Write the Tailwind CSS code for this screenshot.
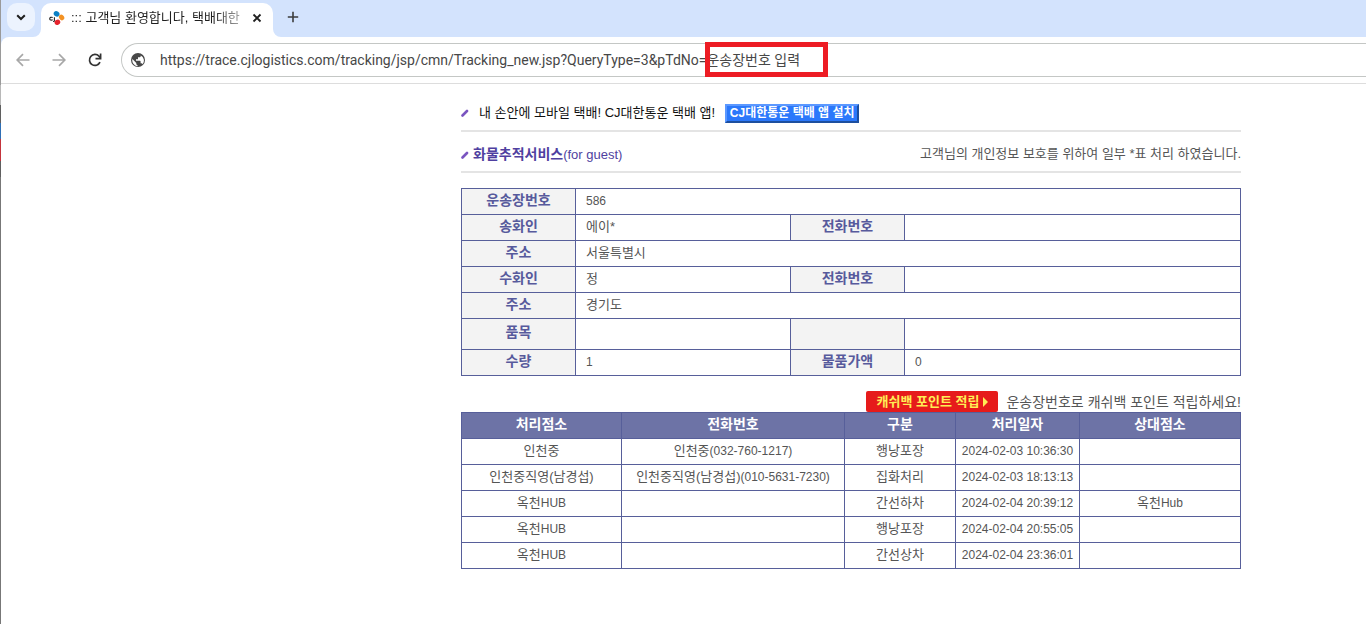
<!DOCTYPE html>
<html lang="ko">
<head>
<meta charset="utf-8">
<title>::: 고객님 환영합니다, 택배대한통운 :::</title>
<script src="https://cdn.jsdelivr.net/npm/@tailwindcss/browser@4"></script>
</head>
<body class="min-h-screen flex bg-white overflow-x-hidden text-[13px] leading-5 text-[#555] font-['Liberation_Sans','Noto_Sans_CJK_KR',sans-serif]">
<!-- window edge -->
<div class="w-px shrink-0 flex flex-col bg-[#777]">
  <div class="h-[85px] bg-[#9a9a9a]"></div><div class="h-5 bg-[#b8b8b8]"></div><div class="h-[18px] bg-[#5f5f5f]"></div><div class="h-4 bg-[#2f6fb5]"></div><div class="h-[22px] bg-[#c4343c]"></div><div class="h-4 bg-[#5f5f5f]"></div>
</div>
<div class="flex-1 min-w-0">
  <header class="bg-[#d3e3fd]">
    <div class="flex h-[37px] pl-1.5">
      <button aria-label="탭 검색" class="mt-[3px] size-7 rounded-[10px] bg-[#ecf3fe] flex items-center justify-center">
        <svg class="size-3" viewBox="0 0 12 12" fill="none" stroke="#1f1f1f" stroke-width="2"><path d="M2.2 4.2 6 8l3.800-3.800"/></svg>
      </button>
      <svg class="self-end w-2 h-2 -ml-0.5" viewBox="0 0 8 8"><path d="M8 0v8H0a8 8 0 0 0 8-8z" fill="#fff"/></svg>
      <div class="mt-[3px] w-[232px] rounded-t-[10px] bg-white flex items-center pl-2 pr-2 pb-1">
        <svg class="size-4 shrink-0" viewBox="0 0 16 16"><ellipse cx="7.600" cy="3.800" rx="3" ry="2.600" transform="rotate(35 7.600 3.800)" fill="#0b80c4"/><ellipse cx="12.600" cy="7.400" rx="3" ry="2.500" transform="rotate(55 12.600 7.400)" fill="#f39223"/><ellipse cx="8.400" cy="12.200" rx="2.900" ry="2.600" transform="rotate(-30 8.400 12.200)" fill="#e5232c"/><path d="M3.700 7.600c-1.400-.8-3-.2-3 1.100s1.600 1.800 3 1M5.400 7.200v3.200c0 .9-.5 1.200-1.300 1.100" fill="none" stroke="#222" stroke-width="1.100"/></svg>
        <span class="ml-1.5 whitespace-nowrap text-[#1f1f1f] [mask-image:linear-gradient(to_right,#000_84%,#0006)]">::: 고객님 환영합니다, 택배대한</span>
        <button aria-label="탭 닫기" class="ml-auto size-4 flex items-center justify-center"><svg class="size-3" viewBox="0 0 12 12" stroke="#1f1f1f" stroke-width="1.800"><path d="m2.500 2.500 7 7m0-7-7 7"/></svg></button>
      </div>
      <svg class="self-end w-2 h-2" viewBox="0 0 8 8"><path d="M0 0v8h8a8 8 0 0 1-8-8z" fill="#fff"/></svg>
      <button aria-label="새 탭" class="mt-[3px] -ml-0.5 size-7 flex items-center justify-center"><svg class="size-3" viewBox="0 0 12 12" stroke="#3c3c3c" stroke-width="1.600"><path d="M6 .8v10.400M.8 6h10.400"/></svg></button>
    </div>
    <nav class="flex items-center h-[47px] bg-white rounded-tl-lg border-b border-[#ddd]">
      <button aria-label="뒤로" class="ml-3 size-5 flex items-center justify-center"><svg class="size-3.5" viewBox="0 0 14 14" fill="none" stroke="#a8a8a8" stroke-width="1.700"><path d="M13.500 7H1.500M7 1.200 1.200 7 7 12.800"/></svg></button>
      <button aria-label="앞으로" class="ml-4 size-5 flex items-center justify-center"><svg class="size-3.5" viewBox="0 0 14 14" fill="none" stroke="#a8a8a8" stroke-width="1.700"><path d="M.5 7h12M7 1.200 12.800 7 7 12.800"/></svg></button>
      <button aria-label="새로고침" class="ml-4 size-5 flex items-center justify-center"><svg class="size-3.5" viewBox="0 0 14 14" fill="none" stroke="#333" stroke-width="1.700"><path d="M12 9.200A5.500 5.500 0 1 1 11 3.200L12.500 5"/><path d="M12.600.5v5.200H7.500" /></svg></button>
      <div class="relative flex-1 ml-4 h-[34px] flex items-center rounded-l-full border border-r-0 border-[#c4c7c5]">
        <svg class="ml-2 size-4 shrink-0" viewBox="0 0 16 16"><circle cx="8" cy="8" r="7" fill="#474747"/><path d="M2.400 7.100 6.300 11v.8c0 .7.600 1.300 1.200 1.300v1.200A6 6 0 0 1 2.400 7.100zM12.600 12.200c-.2-.6-.7-.9-1.300-.9h-.7V9.400c0-.4-.3-.7-.6-.7H6V7.300h1.400c.3 0 .6-.3.600-.6V5.300h1.400c.8 0 1.300-.6 1.300-1.300v-.6a5.800 5.800 0 0 1 1.900 8.800z" fill="#fff"/></svg>
        <input id="url" aria-label="주소창" class="ml-3.5 flex-1 min-w-0 outline-none text-sm text-[#474747] font-['Roboto','Noto_Sans_CJK_KR',sans-serif]" value="https://trace.cjlogistics.com/tracking/jsp/cmn/Tracking_new.jsp?QueryType=3&amp;pTdNo=운송장번호 입력">
        <div class="absolute left-[583px] -top-0.5 w-[123px] h-[35px] border-[5px] border-[#ed1c24]"></div>
      </div>
    </nav>
  </header>

  <main class="pl-[460px] pr-[125px] pt-4 pb-10">
    <div class="flex items-center h-8 pb-1 border-b-2 border-[#e4e4e4] text-[#111]">
      <svg class="size-2 shrink-0" viewBox="0 0 8 8"><path d="M1.500 6.500 6 2" stroke="#7a55c0" stroke-width="2.600" stroke-linecap="round"/></svg>
      <span class="ml-2.5 whitespace-nowrap">내 손안에 모바일 택배! CJ대한통운 택배 앱!</span>
      <button class="ml-2.5 h-[19px] w-[134px] bg-[#2b78fb] border-2 border-t-[#5b98ff] border-l-[#5b98ff] border-r-[#1d4f9f] border-b-[#1d4f9f] text-white font-bold text-xs leading-[14px] whitespace-nowrap">CJ대한통운 택배 앱 설치</button>
    </div>
    <div class="flex items-center h-[41px] border-b-2 border-[#e4e4e4] pt-1.5">
      <svg class="size-2 shrink-0" viewBox="0 0 8 8"><path d="M1.500 6.500 6 2" stroke="#7a55c0" stroke-width="2.600" stroke-linecap="round"/></svg>
      <h1 class="ml-1 text-sm font-bold text-[#4f3fa0] whitespace-nowrap">화물추적서비스<span class="text-[13px] font-normal">(for guest)</span></h1>
      <p class="ml-auto pb-0.5 whitespace-nowrap">고객님의 개인정보 보호를 위하여 일부 *표 처리 하였습니다.</p>
    </div>

    <table class="mt-[15px] w-full table-fixed border-collapse [&_td]:border [&_td]:border-[#575f9a] [&_td]:px-2.5 [&_td]:pb-0.5 [&_th]:border [&_th]:border-[#575f9a] [&_th]:bg-[#f3f3f3] [&_th]:text-[#575a9c] [&_th]:text-sm [&_th]:leading-5 [&_th]:pb-1 [&_th]:font-bold">
      <colgroup><col class="w-[114px]"><col class="w-[215px]"><col class="w-[114px]"><col></colgroup>
      <tbody>
        <tr class="h-[26px]"><th scope="row">운송장번호</th><td colspan="3"><span class="text-xs">586</span></td></tr>
        <tr class="h-[26px]"><th scope="row">송화인</th><td>에이*</td><th scope="row">전화번호</th><td></td></tr>
        <tr class="h-[26px]"><th scope="row">주소</th><td colspan="3">서울특별시</td></tr>
        <tr class="h-[26px]"><th scope="row">수화인</th><td>정</td><th scope="row">전화번호</th><td></td></tr>
        <tr class="h-[26px]"><th scope="row">주소</th><td colspan="3">경기도</td></tr>
        <tr class="h-[31px]"><th scope="row">품목</th><td></td><th></th><td></td></tr>
        <tr class="h-[26px]"><th scope="row">수량</th><td><span class="text-xs">1</span></td><th scope="row">물품가액</th><td><span class="text-xs">0</span></td></tr>
      </tbody>
    </table>

    <div class="mt-[15px] flex items-center justify-end">
      <button class="h-[21px] w-[132px] rounded-xs bg-[#e61b1b] text-[#ffee55] font-bold text-[13px] leading-5 flex items-center justify-center gap-1 whitespace-nowrap">캐쉬백 포인트 적립<svg class="w-[5px] h-2.5" viewBox="0 0 5 10"><path d="M0 0l5 5-5 5z" fill="#ffee55"/></svg></button>
      <p class="ml-2 text-sm leading-5 whitespace-nowrap">운송장번호로 캐쉬백 포인트 적립하세요!</p>
    </div>

    <table class="w-full table-fixed border-collapse text-center whitespace-nowrap [&_td]:border [&_td]:border-[#575f9a] [&_td]:pb-0.5 [&_th]:border [&_th]:border-[#575f9a] [&_th]:bg-[#6d73a6] [&_th]:text-white [&_th]:text-sm [&_th]:leading-5 [&_th]:pb-1 [&_th]:font-bold">
      <colgroup><col class="w-[160px]"><col class="w-[223px]"><col class="w-[111px]"><col class="w-[124px]"><col></colgroup>
      <thead><tr class="h-[26px]"><th scope="col">처리점소</th><th scope="col">전화번호</th><th scope="col">구분</th><th scope="col">처리일자</th><th scope="col">상대점소</th></tr></thead>
      <tbody>
        <tr class="h-[26px]"><td>인천중</td><td>인천중<span class="text-xs">(032-760-1217)</span></td><td>행낭포장</td><td><span class="text-xs">2024-02-03 10:36:30</span></td><td></td></tr>
        <tr class="h-[26px]"><td>인천중직영(남경섭)</td><td>인천중직영(남경섭)<span class="text-xs">(010-5631-7230)</span></td><td>집화처리</td><td><span class="text-xs">2024-02-03 18:13:13</span></td><td></td></tr>
        <tr class="h-[26px]"><td>옥천<span class="text-xs">HUB</span></td><td></td><td>간선하차</td><td><span class="text-xs">2024-02-04 20:39:12</span></td><td>옥천<span class="text-xs">Hub</span></td></tr>
        <tr class="h-[26px]"><td>옥천<span class="text-xs">HUB</span></td><td></td><td>행낭포장</td><td><span class="text-xs">2024-02-04 20:55:05</span></td><td></td></tr>
        <tr class="h-[26px]"><td>옥천<span class="text-xs">HUB</span></td><td></td><td>간선상차</td><td><span class="text-xs">2024-02-04 23:36:01</span></td><td></td></tr>
      </tbody>
    </table>
  </main>
</div>
</body>
</html>
